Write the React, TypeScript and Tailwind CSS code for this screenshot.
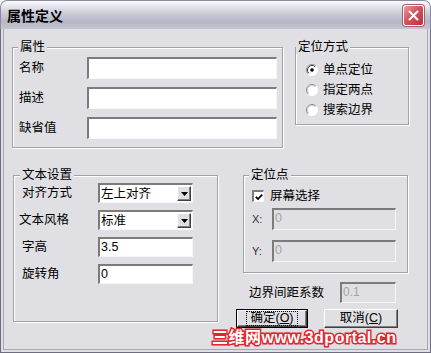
import React from "react";

const FONT = "font-['Liberation_Sans','Noto_Sans_CJK_SC',sans-serif]";

function Sunken({
  className = "",
  disabled = false,
  children,
}: {
  className?: string;
  disabled?: boolean;
  children?: React.ReactNode;
}) {
  return (
    <div
      className={`flex border-t-2 border-l-2 border-b border-r border-t-[#7b7b7b] border-l-[#7b7b7b] border-b-[#f6f6f6] border-r-[#f6f6f6] ${
        disabled ? "bg-[#e0dfe3] text-[#a4a4a4]" : "bg-white text-black"
      } ${className}`}
    >
      {children}
    </div>
  );
}

function Group({
  title,
  className = "",
  titleClass = "ml-[5px]",
  children,
}: {
  title: string;
  className?: string;
  titleClass?: string;
  children?: React.ReactNode;
}) {
  return (
    <div
      className={`flex flex-col border border-[#a0a0a8] shadow-[inset_1px_1px_0_#ffffff,1px_1px_0_#ffffff] ${className}`}
    >
      <span
        className={`-mt-[8px] self-start bg-[#e0dfe3] px-[2px] text-[12.5px] leading-[14px] h-[14px] ${titleClass}`}
      >
        {title}
      </span>
      {children}
    </div>
  );
}

function Radio({ checked }: { checked?: boolean }) {
  return (
    <svg width="12" height="12" viewBox="0 0 12 12" className="shrink-0">
      <circle cx="6" cy="6" r="5.5" fill="#ffffff" />
      <path d="M2.11 9.89 A5.5 5.5 0 0 1 9.89 2.11" fill="none" stroke="#8a8a8a" strokeWidth="1" />
      <path d="M9.89 2.11 A5.5 5.5 0 0 1 2.11 9.89" fill="none" stroke="#ffffff" strokeWidth="1" />
      <path d="M2.8 9.2 A4.5 4.5 0 0 1 9.2 2.8" fill="none" stroke={checked ? "#404040" : "#c8c8c8"} strokeWidth="1" />
      {checked && <circle cx="6" cy="6" r="1.8" fill="#000000" />}
    </svg>
  );
}

function Combo({ value }: { value: string }) {
  return (
    <Sunken className="w-[95px] h-[20px] items-center pr-[1px]">
      <span className="flex-1 pl-[1px] text-[12.5px] leading-[14px]">{value}</span>
      <div className="w-[14px] h-[15px] flex items-center justify-center bg-[#e0dfe3] border border-t-white border-l-white border-r-[#404040] border-b-[#404040] shadow-[inset_-1px_-1px_0_#808080]">
        <svg width="7" height="4" viewBox="0 0 7 4">
          <path d="M0 0 H7 L3.5 4 Z" fill="#000000" />
        </svg>
      </div>
    </Sunken>
  );
}

function RaisedButton({
  children,
  isDefault,
  className = "",
}: {
  children: React.ReactNode;
  isDefault?: boolean;
  className?: string;
}) {
  const inner = (
    <div className="flex-1 flex items-center justify-center bg-[#e0dfe3] border border-t-white border-l-white border-r-[#404040] border-b-[#404040] shadow-[inset_-1px_-1px_0_#808080]">
      <span
        className={`px-[3px] text-[12.5px] leading-[13px] ${
          isDefault ? "border border-dotted border-black" : "border border-transparent"
        }`}
      >
        {children}
      </span>
    </div>
  );
  if (isDefault) {
    return <div className={`flex border border-black ${className}`}>{inner}</div>;
  }
  return <div className={`flex ${className}`}>{inner}</div>;
}

export default function App() {
  return (
    <div className={`relative w-[431px] h-[353px] bg-white flex flex-col ${FONT} text-[12.5px] text-black`}>
      {/* Title bar */}
      <div className="h-[29px] shrink-0 flex items-center rounded-t-[7px] border border-b-0 border-[#8c8ca0] bg-[linear-gradient(to_bottom,#fcfcfe_0%,#e6e6ee_18%,#c9c9d6_48%,#b6b6c6_72%,#c4c4d2_100%)] pl-[6px] pr-[6px]">
        <span className="flex-1 text-[14px] font-bold leading-[16px] pt-[1px]">属性定义</span>
        <div className="w-[21px] h-[21px] flex items-center justify-center rounded-[3px] border border-white bg-[linear-gradient(135deg,#ec9a9a_0%,#d4545c_45%,#bb3038_100%)] shadow-[0_0_0_1px_#a06070]">
          <svg width="11" height="11" viewBox="0 0 11 11">
            <path d="M1.5 1.5 L9.5 9.5 M9.5 1.5 L1.5 9.5" stroke="#ffffff" strokeWidth="2" strokeLinecap="round" />
          </svg>
        </div>
      </div>

      {/* Body */}
      <div className="flex-1 flex flex-col border-x border-b border-[#6c6c7e] bg-[#e0dfe3]">
        <div className="flex-1 flex flex-col mx-[2px] mb-[2px] border-x border-b border-[#a8a8b4]">
          {/* Row 1 */}
          <div className="flex items-start pt-[18px] pl-[8px] gap-[12px]">
            <Group title="属性" className="w-[271px] h-[101px]">
              <div className="flex flex-col gap-[8px] mt-[3px] pl-[6px]">
                {["名称", "描述", "缺省值"].map((l) => (
                  <div key={l} className="flex items-center h-[22px]">
                    <span className="w-[68px] leading-[14px]">{l}</span>
                    <Sunken className="w-[190px] h-[22px]" />
                  </div>
                ))}
              </div>
            </Group>
            <Group title="定位方式" className="w-[114px] h-[78px]" titleClass="ml-0">
              <div className="flex flex-col mt-[6px] pl-[10px]">
                {[
                  { l: "单点定位", c: true },
                  { l: "指定两点", c: false },
                  { l: "搜索边界", c: false },
                ].map((r) => (
                  <div key={r.l} className="flex items-center h-[20px] gap-[5px]">
                    <Radio checked={r.c} />
                    <span className="leading-[14px]">{r.l}</span>
                  </div>
                ))}
              </div>
            </Group>
          </div>

          {/* Row 2 */}
          <div className="flex items-start mt-[27px] pl-[9px] gap-[18px]">
            <Group title="文本设置" className="w-[205px] h-[147px]" titleClass="ml-[6px]">
              <div className="flex flex-col gap-[7px] mt-[1px] pl-[8px]">
                <div className="flex items-center h-[20px]">
                  <span className="w-[76px] leading-[14px]">对齐方式</span>
                  <Combo value="左上对齐" />
                </div>
                <div className="flex items-center h-[20px]">
                  <span className="w-[76px] -ml-[3px] mr-[3px] leading-[14px]">文本风格</span>
                  <Combo value="标准" />
                </div>
                <div className="flex items-center h-[20px]">
                  <span className="w-[76px] leading-[14px]">字高</span>
                  <Sunken className="w-[95px] h-[20px] items-start">
                    <span className="pl-[1px] pt-[1px] leading-[14px]">3.5</span>
                  </Sunken>
                </div>
                <div className="flex items-center h-[20px]">
                  <span className="w-[76px] leading-[14px]">旋转角</span>
                  <Sunken className="w-[95px] h-[20px] items-start">
                    <span className="pl-[1px] pt-[1px] leading-[14px]">0</span>
                  </Sunken>
                </div>
              </div>
            </Group>

            <div className="flex flex-col w-[172px]">
              <Group title="定位点" className="ml-[7px] w-[165px] h-[98px]" titleClass="ml-[5px]">
                <div className="flex items-center h-[14px] mt-[7px] pl-[8px] gap-[6px]">
                  <div className="w-[12px] h-[12px] flex items-center justify-center bg-white border-t-2 border-l-2 border-b border-r border-t-[#7b7b7b] border-l-[#7b7b7b] border-b-[#f6f6f6] border-r-[#f6f6f6]">
                    <svg width="8" height="8" viewBox="0 0 8 8">
                      <path d="M0.8 3.8 L3 6 L7.2 1.6" fill="none" stroke="#000000" strokeWidth="1.8" />
                    </svg>
                  </div>
                  <span className="leading-[14px]">屏幕选择</span>
                </div>
                <div className="flex items-center h-[22px] mt-[5px] pl-[8px]">
                  <span className="w-[20px] text-[11px] leading-[14px] text-[#333]">X:</span>
                  <Sunken disabled className="w-[124px] h-[22px] items-start">
                    <span className="pl-[1px] pt-[1px] leading-[14px]">0</span>
                  </Sunken>
                </div>
                <div className="flex items-center h-[22px] mt-[10px] pl-[8px]">
                  <span className="w-[20px] text-[11px] leading-[14px] text-[#333]">Y:</span>
                  <Sunken disabled className="w-[124px] h-[22px] items-start">
                    <span className="pl-[1px] pt-[1px] leading-[14px]">0</span>
                  </Sunken>
                </div>
              </Group>

              <div className="flex items-center h-[21px] mt-[9px] pl-[13px]">
                <span className="w-[91px] leading-[14px]">边界间距系数</span>
                <Sunken disabled className="w-[56px] h-[21px] items-start">
                  <span className="pl-[1px] pt-[1px] text-[12px] leading-[14px]">0.1</span>
                </Sunken>
              </div>

              <div className="flex items-center mt-[6px] gap-[16px]">
                <RaisedButton isDefault className="w-[72px] h-[19px]">
                  确定(<span className="underline">O</span>)
                </RaisedButton>
                <RaisedButton className="w-[74px] h-[19px]">
                  取消(<span className="underline">C</span>)
                </RaisedButton>
              </div>
            </div>
          </div>
        </div>
      </div>

      {/* Watermark */}
      <div className="absolute left-[212px] top-[329px] whitespace-nowrap font-['Liberation_Sans','Noto_Sans_CJK_SC',sans-serif] font-bold text-[16px] leading-[17px] tracking-[0.5px] text-white [-webkit-text-stroke:3px_#e2242c] [paint-order:stroke_fill]">
        三维网www.3dportal.cn
      </div>
    </div>
  );
}
